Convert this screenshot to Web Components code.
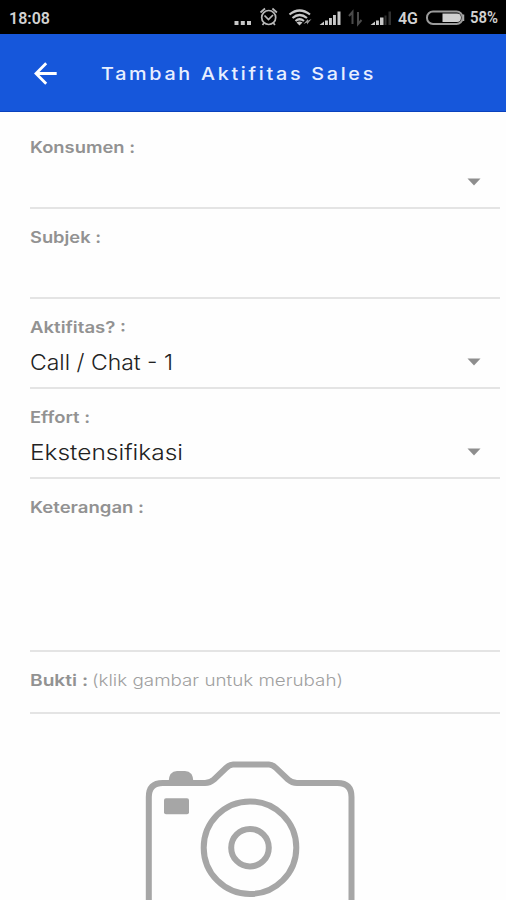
<!DOCTYPE html>
<html lang="id">
<head>
<meta charset="utf-8">
<title>Tambah Aktifitas Sales</title>
<style>
html,body{margin:0;background:#fefefe;height:900px;overflow:hidden;font-family:Inter,"Open Sans",sans-serif}
</style>
</head>
<body>
<sales-app></sales-app>
<script>
/* One line of text stretched to an exact width. */
class FitText extends HTMLElement{
  connectedCallback(){
    const w=+this.getAttribute('w'),s=+this.getAttribute('size'),h=Math.round(s*1.4),b=Math.round(s);
    this.attachShadow({mode:'open'}).innerHTML=`<style>
      :host{display:block;width:${w}px;height:${h}px;flex:none}
      svg{display:block;overflow:visible}
      text{font-size:${s}px;fill:currentColor;letter-spacing:${this.getAttribute('track')||0}px}
      </style><svg width="${w}" height="${h}"><text x="0" y="${b}" textLength="${w}" lengthAdjust="spacingAndGlyphs"></text></svg>`;
    this.shadowRoot.querySelector('text').textContent=this.getAttribute('text');
  }
}
customElements.define('fit-text',FitText);

class StatusBar extends HTMLElement{
  constructor(){
    super();
    this.attachShadow({mode:'open'}).innerHTML=`<style>
      :host{display:flex;height:34px;background:#000;color:#d2d2d2;font-family:Roboto,sans-serif;font-weight:600;box-sizing:border-box;padding:7px 8px 0 9px}
      .icons{margin-left:auto;display:flex}
      svg.i{display:block;margin-top:-7px;flex:none}
      svg.bat{margin:-7px 4px 0 7px}
    </style>
    <fit-text text="18:08" w="41" size="16.5"></fit-text>
    <div class="icons">
      <svg class="i" width="162" height="34" viewBox="230 0 162 34" fill="#c8c8c8">
        <path d="M234.500 21h4v4h-4zM240.800 21h4v4h-4zM247 21h4v4h-4z"/>
        <g fill="none" stroke="#b8b8b8" stroke-width="1.700">
          <circle cx="268.700" cy="17.500" r="7"/>
          <path d="M264.500 15.500l4 4 4.500-4.500M260.500 12.500l4.500-4M276.900 12.500l-4.500-4M264 23l-1.500 2M273.400 23l1.500 2"/>
        </g>
        <g fill="none" stroke="#c8c8c8" stroke-width="2.200">
          <path d="M289.500 14.500q10-8 20.500 0M292.500 18q7-6 14.500 0M295.500 21q4-3.500 8.500 0"/>
        </g>
        <path d="M296.500 22.500q3-2 6 0l-3 3z"/>
        <path d="M303.500 24l4.500-5v2.500h1.500zM311.500 19l-4.500 5.500v-3h-1z" fill="#999"/>
        <path d="M319.500 25l4.500-3.500V25zM325 20.500h2.900V25H325zM329 18h2.900v7H329zM333 15h2.900v10H333zM337.500 11.500h3V25h-3z"/>
        <path d="M352.500 24V12l-3.500 4M358 12v12l3.500-4" fill="none" stroke="#4b4b4b" stroke-width="2"/>
        <path d="M370.500 25l4.500-3.500V25zM376 20.500h2.900V25H376zM380 17.500h3.500V25H380z"/>
        <path d="M384.500 15.500h2V25h-2zM388.500 11.500h2.500V25h-2.500z" fill="#303030"/>
      </svg>
      <fit-text style="margin-left:6px" text="4G" w="20" size="16.500"></fit-text>
      <svg class="i bat" width="41" height="34" viewBox="425 0 41 34">
        <rect x="427" y="11.500" width="35.500" height="12.500" rx="6" fill="#000" stroke="#9b9b9b" stroke-width="2"/>
        <path d="M442.500 13.500H457q4 0 4 4.300 0 4.200-4 4.200h-14.500z" fill="#d0d0d0"/>
        <path d="M463.500 14.500v6.500" stroke="#aaa" stroke-width="1.500"/>
      </svg>
      <fit-text text="58%" w="28" size="15.800"></fit-text>
    </div>`;
  }
}
customElements.define('status-bar',StatusBar);

class TopBar extends HTMLElement{
  constructor(){
    super();
    this.attachShadow({mode:'open'}).innerHTML=`<style>
      :host{display:flex;height:79px;box-sizing:border-box;background:#1657db;color:#e8efff;border-bottom:1px solid #0a41bd;padding:28px 0 0 34px;font-weight:450}
      svg{display:block;flex:none}
      fit-text{margin:0 0 0 43px}
    </style>
    <svg width="24" height="24" viewBox="0 0 24 24" fill="none" stroke="#fff" stroke-width="2.800"><path d="M22.700 11.500H2.500M12.200 1.300L2 11.500l10.200 10.200"/></svg>
    <fit-text text="Tambah Aktifitas Sales" w="275" size="17.500" track="2.400"></fit-text>`;
  }
}
customElements.define('top-bar',TopBar);

/* A captioned form row with an underline; the value goes in the slot. */
class FormRow extends HTMLElement{
  constructor(){
    super();
    this.attachShadow({mode:'open'}).innerHTML=`<style>
      :host{display:block;box-sizing:border-box;height:90px;border-bottom:2px solid #e4e4e4;padding-top:18px}
      .cap{display:flex;gap:4px;color:#929292;font-weight:600}
      .val{display:flex;justify-content:space-between;color:#222;font-weight:300;padding-top:9px;height:31px}
      .arrow{display:block;margin:10px 19px 0 auto}
    </style>
    <div class="cap"><fit-text></fit-text><slot name="hint"></slot></div>
    <div class="val"><slot></slot></div>`;
  }
  connectedCallback(){
    const old=this.shadowRoot.querySelector('fit-text'),t=document.createElement('fit-text');
    t.setAttribute('text',this.getAttribute('label'));
    t.setAttribute('w',this.getAttribute('w'));
    t.setAttribute('size','16');
    old.replaceWith(t);
    if(this.hasAttribute('select'))this.shadowRoot.querySelector('.val').insertAdjacentHTML('beforeend','<svg class="arrow" width="14" height="8" viewBox="0 0 14 8"><path d="M.5.500h13L7 7.500z" fill="#8e8e8e"/></svg>');
  }
}
customElements.define('form-row',FormRow);

class PhotoPicker extends HTMLElement{
  constructor(){
    super();
    this.attachShadow({mode:'open'}).innerHTML=`<style>
      :host{display:block;padding:36px 0 0 105px}
      svg{display:block}
    </style>
    <svg width="230" height="150" viewBox="135 750 230 150">
      <g fill="none" stroke="#a6a6a6" stroke-width="6">
        <path d="M148.800 910V797q0-14 14-14H205q5 0 9-3.500l12-11.500q3.500-3.500 7-3.500h36q3.500 0 7 3.500l12 11.500q4 3.500 9 3.500h40.500q14 0 14 14v113"/>
        <circle cx="250" cy="847.700" r="46.300"/>
        <circle cx="250" cy="847.700" r="18.800"/>
      </g>
      <path d="M168.500 782q.5-11 8.500-11h8q8 0 8.500 11z" fill="#a6a6a6"/>
      <rect x="164" y="798.300" width="25" height="16" rx="2" fill="#a6a6a6"/>
    </svg>`;
  }
}
customElements.define('photo-picker',PhotoPicker);

class SalesApp extends HTMLElement{
  constructor(){
    super();
    this.attachShadow({mode:'open'}).innerHTML=`<style>
      :host{display:flex;flex-direction:column;height:900px;overflow:hidden}
      main{padding:7px 6px 0 30px}
      .tall{height:173px}
      .short{height:62px}
      .hint{color:#a0a0a0;font-weight:300}
    </style>
    <status-bar></status-bar>
    <top-bar></top-bar>
    <main>
      <form-row label="Konsumen :" w="105" select></form-row>
      <form-row label="Subjek :" w="71"></form-row>
      <form-row label="Aktifitas? :" w="96" select><fit-text text="Call / Chat - 1" w="143" size="22"></fit-text></form-row>
      <form-row label="Effort :" w="60" select><fit-text text="Ekstensifikasi" w="153" size="22"></fit-text></form-row>
      <form-row class="tall" label="Keterangan :" w="114"></form-row>
      <form-row class="short" label="Bukti :" w="58"><fit-text slot="hint" class="hint" text="(klik gambar untuk merubah)" w="251" size="16"></fit-text></form-row>
      <photo-picker></photo-picker>
    </main>`;
  }
}
customElements.define('sales-app',SalesApp);
</script>
</body>
</html>
